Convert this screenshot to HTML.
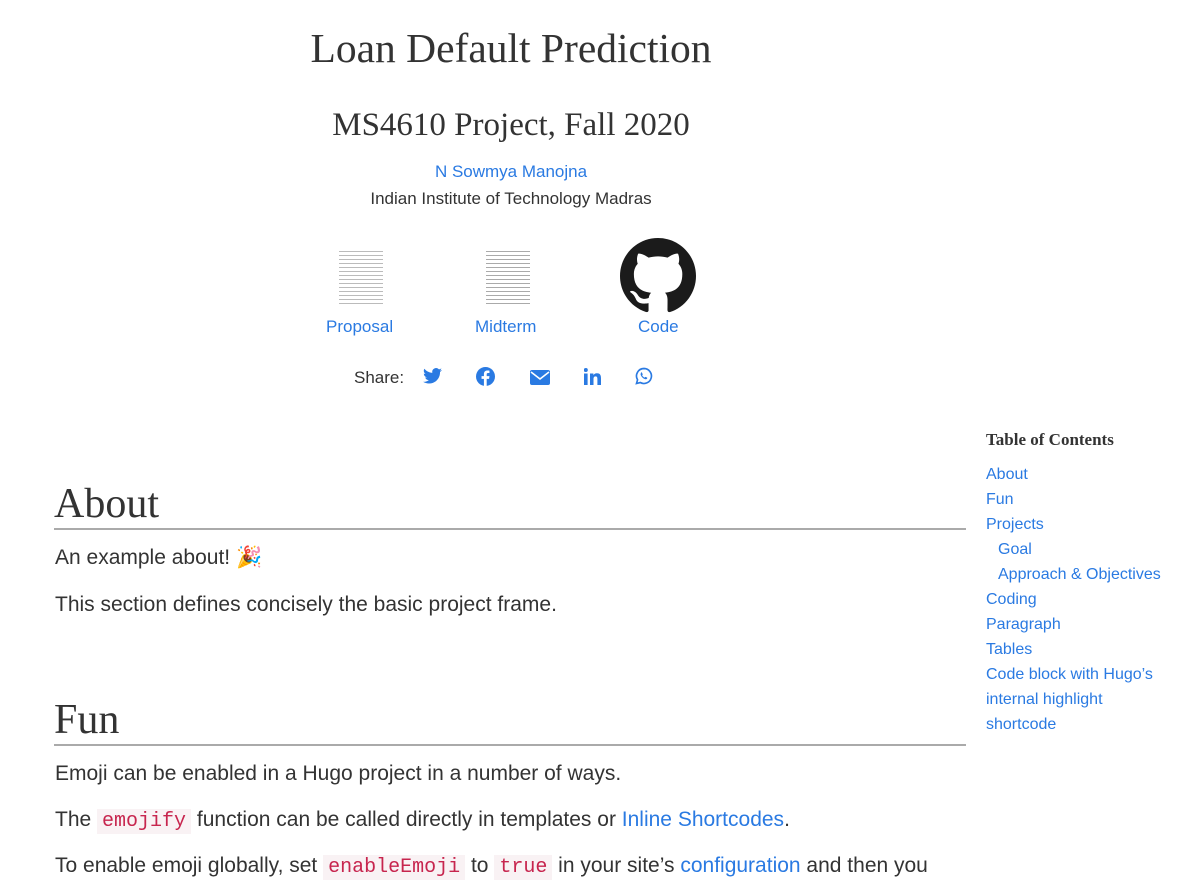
<!DOCTYPE html>
<html><head><meta charset="utf-8"><style>
body{margin:0;background:#fff;color:#333;font-family:"Liberation Sans",sans-serif;width:1198px;height:878px;overflow:hidden;position:relative}
a{color:#2a7ae2;text-decoration:none}
.c{position:absolute;left:0;width:1022px;text-align:center}
.serif{font-family:"Liberation Serif",serif;font-weight:normal}
h2{position:absolute;left:54px;width:912px;margin:0;font-family:"Liberation Serif",serif;font-weight:normal;font-size:42px;border-bottom:2px solid #aaa;line-height:44px;padding-bottom:2px}
p{position:absolute;left:55px;margin:0;font-size:21px;white-space:nowrap}
code{font-family:"Liberation Mono",monospace;color:#c7254e;background:#f9f2f4;padding:1px 5px;font-size:20px}
.toc{position:absolute;left:986px;font-size:16px}
.toc div{height:25px}
.ic{position:absolute;top:367px}
</style></head><body>
<div class="c serif" style="top:24px;font-size:41.5px">Loan Default Prediction</div>
<div class="c serif" style="top:107px;font-size:33px">MS4610 Project, Fall 2020</div>
<div class="c" style="top:162px;font-size:17px"><a>N Sowmya Manojna</a></div>
<div class="c" style="top:189px;font-size:17px">Indian Institute of Technology Madras</div>

<div style="position:absolute;left:339px;top:248px;width:44px;height:58px;background:repeating-linear-gradient(#fff 0 3px,#bbb 3px 4px)"></div>
<div style="position:absolute;left:486px;top:248px;width:44px;height:58px;background:repeating-linear-gradient(#fff 0 3px,#aaa 3px 4px)"></div>
<svg style="position:absolute;left:620px;top:238px" width="76" height="76" viewBox="0 0 16 16"><path fill="#1b1b1b" d="M8 0C3.580 0 0 3.58 0 8c0 3.54 2.29 6.53 5.47 7.59.4.07.55-.17.55-.38 0-.19-.01-.82-.01-1.49-2.01.37-2.53-.49-2.690-.94-.09-.23-.48-.94-.82-1.13-.28-.15-.68-.52-.01-.53.63-.01 1.08.58 1.23.82.72 1.21 1.87.87 2.33.66.07-.52.28-.87.51-1.07-1.78-.2-3.64-.89-3.64-3.95 0-.87.31-1.59.82-2.15-.08-.2-.36-1.02.08-2.12 0 0 .67-.21 2.2.82.64-.18 1.32-.27 2-.27.68 0 1.36.09 2 .27 1.53-1.04 2.2-.82 2.2-.82.44 1.1.16 1.92.08 2.12.51.56.82 1.27.82 2.15 0 3.07-1.87 3.75-3.65 3.95.29.25.54.73.54 1.48 0 1.07-.01 1.93-.01 2.2 0 .21.15.46.55.38A8.013 8.013 0 0016 8c0-4.42-3.58-8-8-8z"/></svg>
<a style="position:absolute;left:326px;top:317px;font-size:17px">Proposal</a>
<a style="position:absolute;left:475px;top:317px;font-size:17px">Midterm</a>
<a style="position:absolute;left:638px;top:317px;font-size:17px">Code</a>

<div style="position:absolute;left:354px;top:368px;font-size:17px">Share:</div>
<svg class="ic" style="left:423px" width="19" height="18" viewBox="0 0 24 20"><path fill="#2a7ae2" d="M24 2.4a10 10 0 01-2.8.8A5 5 0 0023.3.4a10 10 0 01-3.1 1.2A4.9 4.9 0 0011.8 6 14 14 0 011.7.9a4.9 4.9 0 001.5 6.6A4.9 4.9 0 011 6.9a4.9 4.9 0 003.9 4.8 5 5 0 01-2.2.1 4.9 4.9 0 004.6 3.4A9.9 9.9 0 010 17.3 14 14 0 007.5 19.5c9.1 0 14-7.5 14-14v-.6A10 10 0 0024 2.4z"/></svg>
<svg class="ic" style="left:476px" width="19" height="19" viewBox="0 0 24 24"><circle cx="12" cy="12" r="12" fill="#2a7ae2"/><path fill="#fff" d="M13.5 24v-9h3l.5-3.5h-3.5V9.3c0-1 .3-1.7 1.8-1.7H17V4.5c-.3 0-1.4-.1-2.6-.1-2.6 0-4.4 1.6-4.4 4.5v2.6H7V15h3v9z"/></svg>
<svg class="ic" style="left:530px;top:370px" width="20" height="15" viewBox="0 0 20 15"><rect width="20" height="15" rx="2" fill="#2a7ae2"/><path d="M1 2l9 7 9-7" stroke="#fff" stroke-width="1.6" fill="none"/></svg>
<svg class="ic" style="left:584px;top:368px" width="17" height="17" viewBox="0 0 17 17"><rect x="0" y="5.5" width="3.6" height="11.5" fill="#2a7ae2"/><circle cx="1.8" cy="2" r="2" fill="#2a7ae2"/><path fill="#2a7ae2" d="M6 5.5h3.4v1.6c.5-.9 1.7-1.9 3.5-1.9 3.6 0 4.1 2.4 4.1 5.4V17h-3.6v-5.6c0-1.4 0-3-1.8-3s-2.1 1.4-2.1 2.9V17H6z"/></svg>
<svg class="ic" style="left:635px" width="18" height="18" viewBox="0 0 24 24"><path fill="none" stroke="#2a7ae2" stroke-width="2.2" d="M12 2a10 10 0 00-8.6 15.1L2 22l5-1.3A10 10 0 1012 2z"/><path fill="#2a7ae2" d="M8.5 7c.3 0 .6 0 .8.5l1 2.3c0 .3-.6 1-.8 1.2.6 1.3 1.9 2.6 3.4 3.2.3-.3.8-1 1.1-1l2.2 1c.3.2.2 1-.2 1.5-.6.7-1.6.9-2.7.5-2.7-1-4.7-3-5.6-5.4-.5-1.4.2-3.4 1-3.8z"/></svg>

<div class="toc serif" style="top:430px;font-weight:bold;font-size:17px;color:#333">Table of Contents</div>
<div class="toc" style="top:466px">
<div><a>About</a></div><div><a>Fun</a></div><div><a>Projects</a></div>
<div style="padding-left:12px"><a>Goal</a></div><div style="padding-left:12px"><a>Approach &amp; Objectives</a></div>
<div><a>Coding</a></div><div><a>Paragraph</a></div><div><a>Tables</a></div>
<div><a>Code block with Hugo’s</a></div><div><a>internal highlight</a></div><div><a>shortcode</a></div>
</div>

<h2 style="top:482px">About</h2>
<p style="top:546px">An example about! 🎉</p>
<p style="top:593px">This section defines concisely the basic project frame.</p>
<h2 style="top:698px">Fun</h2>
<p style="top:762px">Emoji can be enabled in a Hugo project in a number of ways.</p>
<p style="top:808px">The <code>emojify</code> function can be called directly in templates or <a>Inline Shortcodes</a>.</p>
<p style="top:854px">To enable emoji globally, set <code>enableEmoji</code> to <code>true</code> in your site’s <a>configuration</a> and then you</p>
</body></html>
